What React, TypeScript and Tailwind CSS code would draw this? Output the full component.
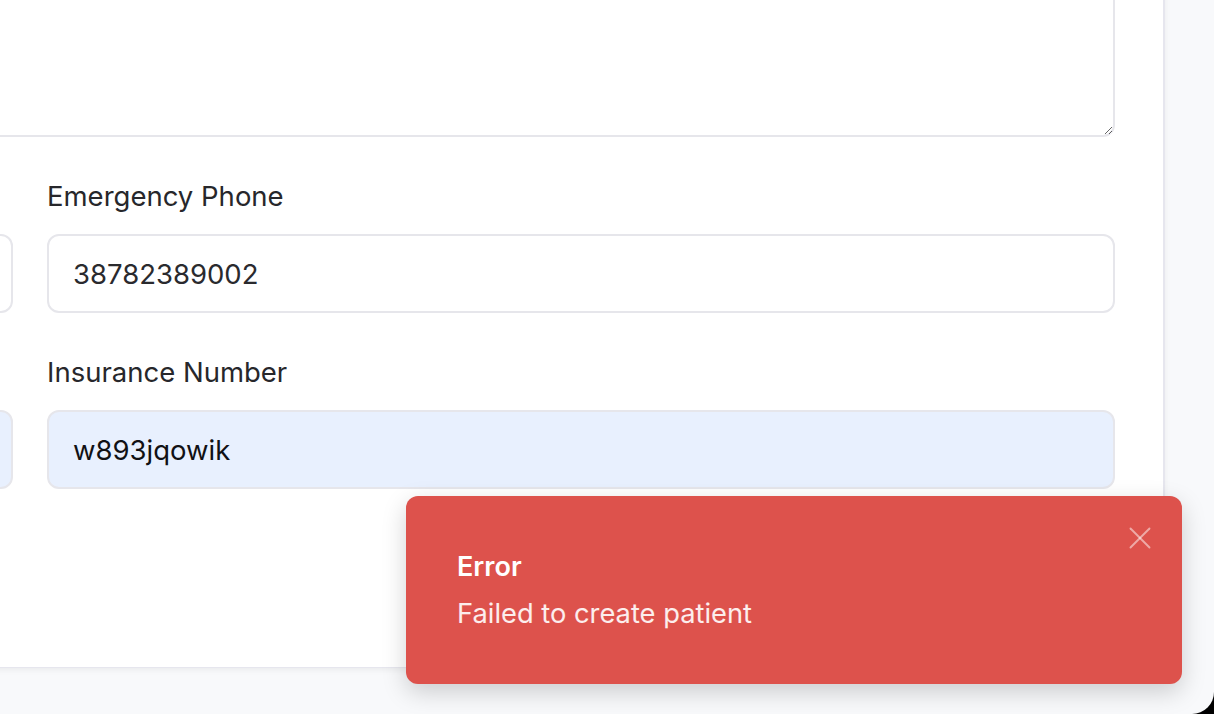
import React from 'react';
import { X } from 'lucide-react';

const Field: React.FC<{ label: string; value: string; autofill?: boolean }> = ({ label, value, autofill }) => (
    <div className="flex flex-col">
        <label className="text-[27.5px] leading-[36px] font-normal text-[#27272b] mb-[20px]">{label}</label>
        <input
            type="text"
            defaultValue={value}
            className={`h-[79px] w-full rounded-[12px] border-2 border-[#e6e6eb] px-[24px] text-[27.5px] outline-none ${
                autofill ? 'bg-[#e8f0fe] text-[#111114]' : 'bg-white text-[#2a2a2e]'
            }`}
        />
    </div>
);

export default function App() {
    return (
        <div className="h-[714px] w-[1214px] bg-black overflow-hidden" style={{ fontFamily: 'Inter, "Noto Sans", sans-serif' }}>
            <div className="relative h-full w-full overflow-hidden rounded-br-[22px] bg-[#f8f9fb]">
                <div className="ml-[-1104px] mt-[-60px] w-max bg-white border-r-2 border-b border-[#e6e6ee] shadow-[0_2px_6px_rgba(0,0,0,0.06)] pl-[49px] pr-[48px] pt-[20px] pb-[178px]">
                    <div className="grid grid-cols-[1068px_1068px] gap-x-[34px] gap-y-[41px]">
                        <textarea className="col-span-2 h-[177px] rounded-[12px] border-2 border-[#e6e6eb] bg-white outline-none resize-y" />
                        <Field label="Emergency Contact" value="Jane Doe" />
                        <Field label="Emergency Phone" value="38782389002" />
                        <Field label="Insurance Provider" value="Aetna" autofill />
                        <Field label="Insurance Number" value="w893jqowik" autofill />
                    </div>
                </div>

                <div className="absolute right-[32px] bottom-[30px] w-[776px] h-[188px] rounded-[12px] bg-[#dd524c] shadow-[0_8px_24px_rgba(0,0,0,0.18)] pl-[51px] pt-[53px]">
                    <button className="absolute right-[23px] top-[23px] text-white/50">
                        <X className="w-[38px] h-[38px]" strokeWidth={1.2} />
                    </button>
                    <p className="text-[27px] leading-[36px] font-semibold text-white">Error</p>
                    <p className="mt-[11px] text-[27.3px] leading-[36px] text-white/90">Failed to create patient</p>
                </div>
            </div>
        </div>
    );
}
